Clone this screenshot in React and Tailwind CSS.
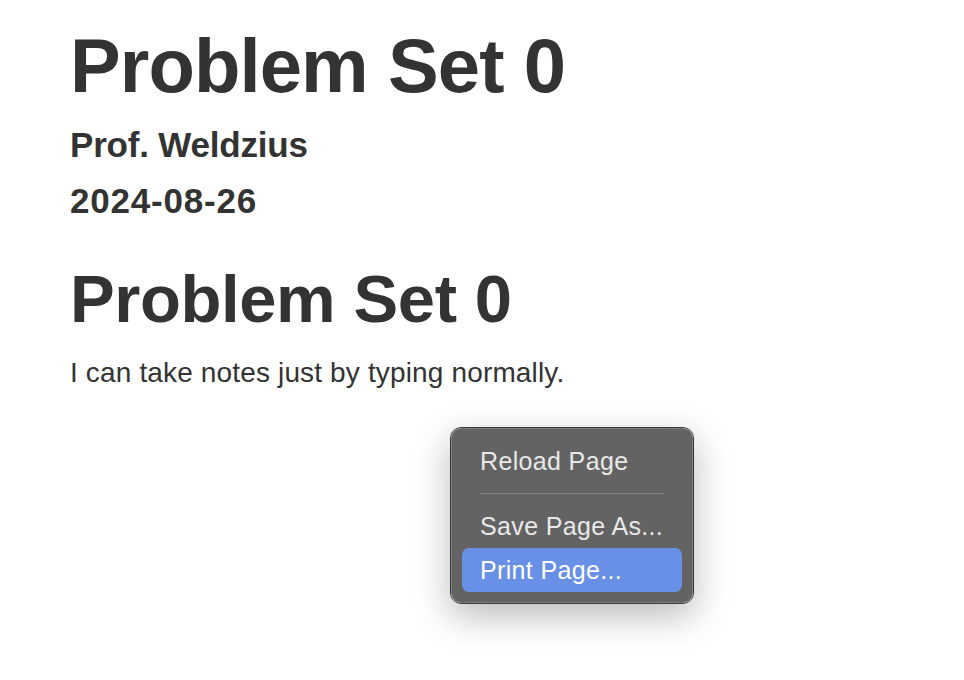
export default function App() {
  return (
    <div className="relative min-h-screen bg-white text-[#333333] font-['Liberation_Sans',Arial,sans-serif]">
      {/* DOCUMENT */}
      <main className="pl-[70px] pt-[28px]">
        <h1 className="text-[76px] leading-[76px] font-bold tracking-[-0.9px]">Problem Set 0</h1>
        <p className="mt-[23px] text-[35px] leading-[35px] font-bold tracking-[-0.2px]">Prof. Weldzius</p>
        <p className="mt-[21px] text-[35px] leading-[35px] font-bold tracking-[0.8px]">2024-08-26</p>

        <h2 className="mt-[47px] text-[67px] leading-[67px] font-bold tracking-[-0.4px]">Problem Set 0</h2>
        <p className="mt-[27px] text-[28px] leading-[28px] tracking-[0.15px]">I can take notes just by typing normally.</p>
      </main>

      {/* CONTEXT MENU */}
      <div className="absolute left-[450px] top-[427px] w-[244px] rounded-[11px] border border-[#3c3c3c] shadow-[0_12px_36px_rgba(0,0,0,0.28)]">
        <div className="rounded-[10px] border border-[#7c7c7c] bg-[#636363] px-[10px] py-[10px] text-[25px] leading-[44px] text-[#e8e8e8] tracking-[0.35px]">
          <div className="px-[18px] h-[44px]">Reload Page</div>
          <div className="h-[21px] flex items-center px-[18px]">
            <div className="h-px w-full bg-[#7e7e7e]" />
          </div>
          <div className="px-[18px] h-[44px]">Save Page As...</div>
          <div className="px-[18px] h-[44px] rounded-[7px] bg-[#6890e6] text-white">Print Page...</div>
        </div>
      </div>
    </div>
  );
}
